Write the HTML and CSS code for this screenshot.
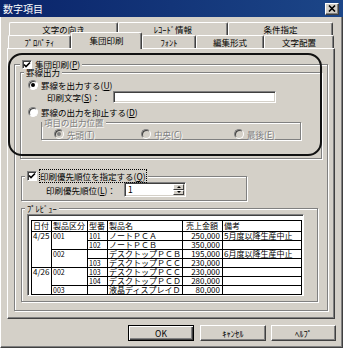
FILE: index.html
```html
<!DOCTYPE html>
<html lang="ja">
<head>
    <meta charset="UTF-8">
    <title>数字項目</title>
    <link rel="stylesheet" href="styles.css">
</head>
<body>
<div class="window">
    <!-- タイトルバー -->
    <div class="titlebar">
        <span class="title">数字項目</span>
        <span class="close">
            <svg width="8" height="7" viewBox="0 0 8 7"><path d="M1 0.5 L7 6.5 M7 0.5 L1 6.5" stroke="#000" stroke-width="1.6"/></svg>
        </span>
    </div>
    <div class="frame">
        <!-- タブ -->
        <div class="tabs">
            <div class="tab-row back">
                <div class="tab t-dir">文字の向き</div>
                <div class="tab t-rec">ﾚｺｰﾄﾞ情報</div>
                <div class="tab t-cond">条件指定</div>
            </div>
            <div class="tab-row front">
                <div class="tab t-prop">ﾌﾟﾛﾊﾟﾃｨ</div>
                <div class="tab t-group active">集団印刷</div>
                <div class="tab t-font">ﾌｫﾝﾄ</div>
                <div class="tab t-edit">編集形式</div>
                <div class="tab t-align">文字配置</div>
            </div>
        </div>
        <!-- タブの中身 -->
        <div class="panel">
            <div class="mark"></div>
            <fieldset class="group g-main">
                <legend><span class="check"><svg width="8" height="8" viewBox="0 0 8 8"><path d="M1 3.5 L3 5.5 L7 1.5" fill="none" stroke="#000" stroke-width="1.6"/></svg></span><span class="lbl">集団印刷(<u>P</u>)</span></legend>

                <fieldset class="group g-rule">
                    <legend>罫線出力</legend>
                    <div class="row r-first"><span class="radio on"></span><span class="lbl">罫線を出力する(<u>U</u>)</span></div>
                    <div class="row r-text">
                        <span class="txt-label">印刷文字(<u>S</u>)：</span>
                        <span class="textbox"></span>
                    </div>
                    <div class="row r-second"><span class="radio"></span><span class="lbl">罫線の出力を抑止する(<u>D</u>)</span></div>

                    <fieldset class="group g-pos dis">
                        <legend>項目の出力位置</legend>
                        <div class="row r-pos">
                            <span class="opt o1"><span class="radio on"></span><span class="lbl">先頭(<u>T</u>)</span></span>
                            <span class="opt o2"><span class="radio"></span><span class="lbl">中央(<u>C</u>)</span></span>
                            <span class="opt"><span class="radio"></span><span class="lbl">最後(<u>E</u>)</span></span>
                        </div>
                    </fieldset>
                </fieldset>

                <fieldset class="group g-order">
                    <legend><span class="check"><svg width="8" height="8" viewBox="0 0 8 8"><path d="M1 3.5 L3 5.5 L7 1.5" fill="none" stroke="#000" stroke-width="1.6"/></svg></span><span class="lbl focus">印刷優先順位を指定する(<u>Q</u>)</span></legend>
                    <div class="row r-order">
                        <span class="order-label">印刷優先順位(<u>L</u>)：</span>
                        <span class="spin">
                            <span class="spin-val">1</span>
                            <span class="spin-btns">
                                <span class="spin-btn"><span class="tri up"></span></span>
                                <span class="spin-btn"><span class="tri down"></span></span>
                            </span>
                        </span>
                    </div>
                </fieldset>

                <fieldset class="group g-preview">
                    <legend>ﾌﾟﾚﾋﾞｭｰ</legend>
                    <div class="preview">
                        <table class="sheet">
                            <colgroup>
                                <col class="c-date"><col class="c-kind"><col class="c-no"><col class="c-name"><col class="c-amt"><col class="c-note">
                            </colgroup>
                            <tr>
                                <th>日付</th><th>製品区分</th><th>型番</th><th>製品名</th><th class="amt-h">売上金額</th><th>備考</th>
                            </tr>
                            <tr>
                                <td class="t">4/25</td><td class="t num">001</td><td class="t num">101</td><td class="t">ノートＰＣＡ</td><td class="t amt">250,000</td><td class="t">5月度以降生産中止</td>
                            </tr>
                            <tr>
                                <td></td><td></td><td class="t num">102</td><td class="t">ノートＰＣＢ</td><td class="t amt">350,000</td><td class="t"></td>
                            </tr>
                            <tr>
                                <td></td><td class="t num">002</td><td class="t"></td><td class="t">デスクトップＰＣＢ</td><td class="t amt">195,000</td><td class="t">6月度以降生産中止</td>
                            </tr>
                            <tr>
                                <td></td><td></td><td class="t num">103</td><td class="t">デスクトップＰＣＣ</td><td class="t amt">230,000</td><td class="t"></td>
                            </tr>
                            <tr>
                                <td class="t">4/26</td><td class="t num">002</td><td class="t num">103</td><td class="t">デスクトップＰＣＣ</td><td class="t amt">230,000</td><td class="t"></td>
                            </tr>
                            <tr>
                                <td></td><td></td><td class="t num">104</td><td class="t">デスクトップＰＣＤ</td><td class="t amt">280,000</td><td class="t"></td>
                            </tr>
                            <tr>
                                <td></td><td class="t num">003</td><td class="t"></td><td class="t">液晶ディスプレイＤ</td><td class="t amt">80,000</td><td class="t"></td>
                            </tr>
                        </table>
                    </div>
                </fieldset>
            </fieldset>
        </div>
        <!-- ボタン -->
        <div class="buttons">
            <span class="btn default">OK</span>
            <span class="btn b-cancel">ｷｬﾝｾﾙ</span>
            <span class="btn b-help">ﾍﾙﾌﾟ</span>
        </div>
    </div>
</div>
</body>
</html>
```

FILE: styles.css
```css
*{
    margin: 0;
    padding: 0;
    box-sizing: border-box;
}
body{
    width: 343px;
    height: 348px;
    overflow: hidden;
    background-color: #d4d0c8;
    font-family: "Noto Sans CJK JP", sans-serif;
    font-size: 8.5px;
    line-height: 10px;
    color: #000;
}
u{
    text-underline-offset: 1px;
}
.window{
    width: 343px;
    height: 348px;
    background-color: #d4d0c8;
}
/*タイトルバー*/
.titlebar{
    height: 17px;
    background: linear-gradient(to right, #0a246a, #1c4688);
    display: flex;
    align-items: center;
    justify-content: space-between;
    padding: 0 4px 0 3px;
}
.titlebar .title{
    color: #fff;
    font-size: 10px;
    line-height: 12px;
}
.titlebar .close{
    width: 14px;
    height: 12px;
    background-color: #d4d0c8;
    border: 1px solid;
    border-color: #fff #404040 #404040 #fff;
    box-shadow: inset -1px -1px 0 #808080;
    display: flex;
    align-items: center;
    justify-content: center;
}
.frame{
    height: 331px;
    border-left: 1px solid #fff;
    border-right: 1px solid #404040;
    border-bottom: 1px solid #404040;
    box-shadow: inset -1px -1px 0 #808080;
}
/*タブ*/
.tabs{
    padding-top: 5px;
}
.tab-row{
    display: flex;
    height: 13px;
    align-items: flex-start;
}
.tab-row.back{
    padding-left: 8px;
}
.tab-row.front{
    padding-left: 7px;
}
.tab{
    height: 13px;
    border-top: 1px solid #fff;
    border-left: 1px solid #fff;
    border-right: 1px solid #404040;
    box-shadow: inset -1px 0 0 #808080;
    border-radius: 2px 2px 0 0;
    text-align: center;
    line-height: 12px;
    white-space: nowrap;
}
.tab.active{
    height: 17px;
    margin-top: -3px;
    padding-top: 1px;
    position: relative;
    z-index: 1;
    background-color: #d4d0c8;
}
.t-dir{ width: 109px; }
.t-rec{ width: 110px; }
.t-cond{ width: 105px; }
.t-prop{ width: 63px; }
.t-group{ width: 71px; }
.t-font{ width: 54px; }
.t-edit{ width: 68px; }
.t-align{ width: 70px; }

.panel{
    position: relative;
    margin-left: 6px;
    width: 328px;
    height: 271px;
    border: 1px solid;
    border-color: #fff #404040 #404040 #fff;
    box-shadow: inset -1px -1px 0 #808080;
    padding: 11px 6px 0 6px;
}
/*黒い囲み*/
.mark{
    position: absolute;
    left: 0;
    top: 4px;
    width: 314px;
    height: 103px;
    border: 2px solid #111;
    border-radius: 14px;
    z-index: 2;
}
/*グループ枠*/
.group{
    min-width: 0;
    border: 1px solid #808080;
    box-shadow: inset 1px 1px 0 #fff, 1px 1px 0 #fff;
}
.group legend{
    padding: 0 2px;
    height: 10px;
    line-height: 10px;
    background-color: #d4d0c8;
    white-space: nowrap;
}
.g-main > legend{
    height: 9px;
    line-height: 9px;
}
.check{
    display: inline-block;
    width: 10px;
    height: 10px;
    vertical-align: top;
    background-color: #fff;
    border: 1px solid;
    border-color: #808080 #fff #fff #808080;
    box-shadow: inset 1px 1px 0 #404040;
    line-height: 0;
}
.g-main > legend .check{
    height: 9px;
}
legend .check + .lbl{
    margin-left: 3px;
}
.focus{
    outline: 1px dotted #000;
    outline-offset: 0;
}
.radio{
    display: inline-block;
    position: relative;
    width: 10px;
    height: 10px;
    border-radius: 50%;
    background-color: #fff;
    border: 1px solid;
    border-color: #808080 #fff #fff #808080;
    box-shadow: inset 1px 1px 0 #404040;
    flex: none;
}
.radio.on::after{
    content: "";
    position: absolute;
    left: 2px;
    top: 2px;
    width: 4px;
    height: 4px;
    border-radius: 50%;
    background-color: #000;
}
.row{
    display: flex;
    align-items: center;
    height: 10px;
    white-space: nowrap;
}
.row .radio + .lbl{
    margin-left: 3px;
}

.g-main{
    width: 314px;
    padding: 0 5px 8px 5px;
}
.g-rule{
    margin-top: -1px;
    padding: 0 3px 18px 3px;
}
.g-rule > legend{
    height: 9px;
    line-height: 9px;
}
.r-first{
    margin-top: 3px;
    padding-left: 4px;
}
.r-text{
    margin-top: 1px;
    height: 12px;
    padding-left: 23px;
}
.txt-label{
    width: 66px;
}
.textbox{
    width: 163px;
    height: 12px;
    background-color: #fff;
    border: 1px solid;
    border-color: #808080 #fff #fff #808080;
    box-shadow: inset 1px 1px 0 #404040, inset -1px -1px 0 #d4d0c8;
}
.r-second{
    margin-top: 4px;
    padding-left: 4px;
}
/*使えない項目*/
.g-pos{
    margin: 1px 0 0 17px;
    width: 260px;
    padding: 0;
}
.g-pos legend{
    height: 9px;
    line-height: 9px;
}
.dis legend,
.dis .lbl{
    color: #808080;
    text-shadow: 1px 1px 0 #fff;
}
.dis .radio{
    background-color: #d4d0c8;
}
.dis .radio.on::after{
    background-color: #808080;
}
.r-pos{
    margin-top: 2px;
    padding-left: 12px;
}
.opt{
    display: flex;
    align-items: center;
}
.o1{ width: 87px; }
.o2{ width: 93px; }

.g-order{
    margin: 12px 0 0 1px;
    width: 226px;
    padding: 0 3px 3px 3px;
}
.r-order{
    margin-top: 1px;
    height: 15px;
    padding-left: 21px;
}
.order-label{
    width: 78px;
}
.spin{
    display: flex;
    width: 62px;
    height: 15px;
    background-color: #fff;
    border: 1px solid;
    border-color: #808080 #fff #fff #808080;
    box-shadow: inset 1px 1px 0 #404040, inset -1px -1px 0 #d4d0c8;
    padding: 1px;
}
.spin-val{
    flex: 1;
    padding-left: 2px;
    line-height: 11px;
}
.spin-btns{
    width: 11px;
    display: flex;
    flex-direction: column;
}
.spin-btn{
    flex: 1;
    background-color: #d4d0c8;
    border: 1px solid;
    border-color: #fff #404040 #404040 #fff;
    display: flex;
    align-items: center;
    justify-content: center;
}
.tri{
    width: 0;
    height: 0;
    border-left: 2px solid transparent;
    border-right: 2px solid transparent;
}
.tri.up{
    border-bottom: 2px solid #000;
}
.tri.down{
    border-top: 2px solid #000;
}

.g-preview{
    margin: 2px 0 0 1px;
    width: 297px;
    padding: 0 3px 5px 3px;
}
.preview{
    margin: 1px 0 0 2px;
    width: 277px;
    height: 82px;
    overflow: hidden;
    background-color: #fff;
    border: 1px solid;
    border-color: #808080 #fff #fff #808080;
    box-shadow: inset 1px 1px 0 #404040;
    padding: 5px 1px 0 3px;
}
/*プレビューの表*/
.sheet{
    width: 271px;
    table-layout: fixed;
    border-collapse: collapse;
    border: 1px solid #000;
    font-size: 8px;
    line-height: 8px;
}
.c-date{ width: 20px; }
.c-kind{ width: 36px; }
.c-no{ width: 20px; }
.c-name{ width: 75px; }
.c-amt{ width: 40px; }
.sheet th{
    height: 11px;
    font-weight: normal;
    text-align: left;
    padding: 0 1px;
    border: 1px solid #000;
    white-space: nowrap;
    overflow: hidden;
}
.sheet th.amt-h{
    padding-left: 3px;
}
.sheet td{
    height: 9px;
    padding: 0 1px;
    border-left: 1px solid #000;
    border-right: 1px solid #000;
    border-top: 0;
    border-bottom: 0;
    white-space: nowrap;
    overflow: hidden;
}
.sheet td.t{
    border-top: 1px solid #000;
}
.sheet td.num{
    font-size: 7px;
}
.sheet td.amt{
    text-align: right;
    padding-right: 2px;
}
/*ボタン*/
.buttons{
    display: flex;
    justify-content: flex-end;
    margin-top: 6px;
    padding-right: 6px;
}
.btn{
    width: 66px;
    height: 16px;
    text-align: center;
    line-height: 14px;
    border: 1px solid;
    border-color: #fff #404040 #404040 #fff;
    box-shadow: inset -1px -1px 0 #808080;
}
.btn.default{
    border-color: #000;
    box-shadow: inset 1px 1px 0 #fff, inset -1px -1px 0 #404040, inset -2px -2px 0 #808080;
}
.b-cancel{
    margin-left: 6px;
}
.b-help{
    margin-left: 5px;
    width: 65px;
}
```
